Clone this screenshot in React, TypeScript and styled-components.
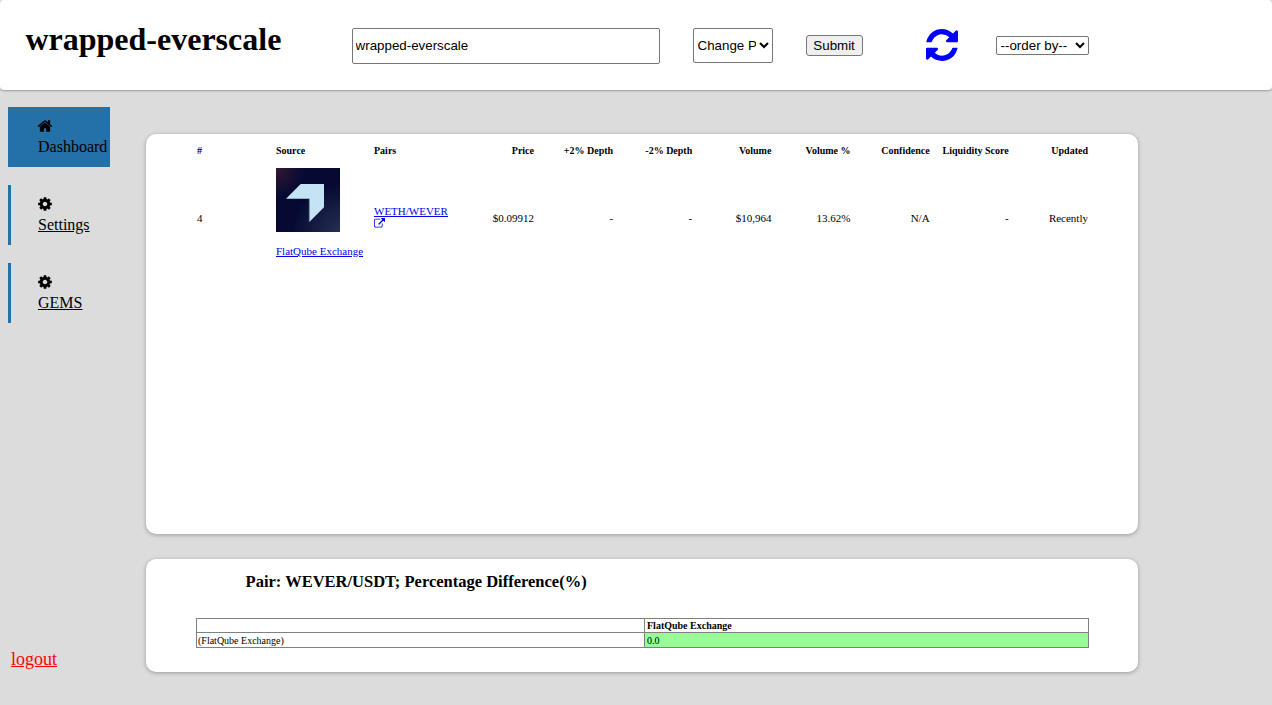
import React from "react";
import styled, { createGlobalStyle } from "styled-components";

const Global = createGlobalStyle`
  html, body { margin: 0; padding: 0; }
  body { background: #dcdcdc; font-family: "Liberation Serif", "Times New Roman", serif; color: #000; }
`;

const Page = styled.div`
  width: 1272px;
  height: 705px;
  display: flex;
  flex-direction: column;
  overflow: hidden;
`;

const Header = styled.header`
  height: 90px;
  flex: none;
  display: flex;
  align-items: flex-start;
  padding-left: 25.44px;
  background: #fff;
  border-radius: 4px;
  box-shadow: 0 1px 2px rgba(0, 0, 0, 0.3);
`;

const Title = styled.h1`
  margin: 21px 0 0;
  width: 255.56px;
  font-size: 32px;
  line-height: 37px;
  font-weight: 700;
  white-space: nowrap;
`;

const SearchInput = styled.input`
  box-sizing: border-box;
  margin: 28px 0 0 70.6px;
  width: 308px;
  height: 36px;
  padding: 0 3px 2px;
  font: 13.3333px "Liberation Sans", Arial, sans-serif;
  border: 1px solid #767676;
  border-radius: 2px;
  background: #fff;
`;

const ChangeSelect = styled.select`
  box-sizing: border-box;
  margin: 28px 0 0 33px;
  width: 80px;
  height: 35px;
  font: 13.3333px "Liberation Sans", Arial, sans-serif;
  border: 1px solid #767676;
  border-radius: 2px;
  background: #fff;
`;

const SubmitButton = styled.button`
  box-sizing: border-box;
  margin: 35px 0 0 33px;
  width: 57px;
  height: 21px;
  padding: 1px 6px;
  font: 13.3333px "Liberation Sans", Arial, sans-serif;
  background: #efefef;
  border: 1px solid #767676;
  border-radius: 3px;
  color: #000;
`;

const RefreshIcon = styled.svg`
  margin: 29px 0 0 63px;
  width: 32px;
  height: 32px;
  fill: #0000ff;
  flex: none;
`;

const OrderSelect = styled.select`
  box-sizing: border-box;
  margin: 36px 0 0 38px;
  width: 93px;
  height: 19px;
  font: 13.3333px "Liberation Sans", Arial, sans-serif;
  border: 1px solid #767676;
  border-radius: 2px;
  background: #fff;
`;

const Body = styled.div`
  flex: 1;
  display: flex;
  min-height: 0;
`;

const Sidebar = styled.nav`
  width: 102px;
  flex: none;
  margin-left: 8px;
  padding-top: 17px;
  padding-bottom: 36px;
  display: flex;
  flex-direction: column;
  gap: 18px;
`;

const NavItem = styled.div<{ $active?: boolean }>`
  box-sizing: border-box;
  height: 60px;
  padding: 11px 0 0 ${(p) => (p.$active ? 30 : 27)}px;
  font-size: 16px;
  line-height: 18px;
  white-space: nowrap;
  background: ${(p) => (p.$active ? "#2471a8" : "transparent")};
  border-left: ${(p) => (p.$active ? "0" : "3px solid #2471a8")};
`;

const NavGlyph = styled.svg`
  display: block;
  width: 16px;
  height: 16px;
  margin: 0 0 4px -1px;
  fill: #000;
`;

const NavLink = styled.a<{ $active?: boolean }>`
  color: #000;
  text-decoration: ${(p) => (p.$active ? "none" : "underline")};
`;

const Logout = styled.a`
  margin-top: auto;
  margin-left: 3px;
  color: #ff0000;
  font-size: 18px;
  line-height: 20px;
  text-decoration: underline;
`;

const Main = styled.main`
  margin-left: 36px;
  width: 992px;
  padding-top: 44px;
  display: flex;
  flex-direction: column;
  gap: 25px;
`;

const Card = styled.section<{ $h: number }>`
  box-sizing: border-box;
  height: ${(p) => p.$h}px;
  background: #fff;
  border-radius: 10px;
  box-shadow: 0 1px 4px rgba(0, 0, 0, 0.3);
`;

const DataTable = styled.table`
  margin: 8px 0 0 47px;
  border-collapse: collapse;
  table-layout: fixed;
  width: 899px;
  font-size: 11px;
  line-height: 12px;
`;

const Column = styled.col<{ $w: number }>`
  width: ${(p) => p.$w}px;
`;

const Th = styled.th<{ $left?: boolean }>`
  padding: 3px 4px;
  font-size: 10px;
  font-weight: 700;
  white-space: nowrap;
  text-align: ${(p) => (p.$left ? "left" : "right")};
`;

const Td = styled.td<{ $left?: boolean }>`
  padding: 3px 4px;
  white-space: nowrap;
  vertical-align: middle;
  text-align: ${(p) => (p.$left ? "left" : "right")};
`;

const HashHead = styled(Th)`
  color: #00008b;
`;

const SourceCell = styled.div`
  padding: 5px 0 16px;
`;

const Logo = styled.svg`
  display: block;
  width: 64px;
  height: 64px;
  margin-bottom: 13px;
`;

const BlueLink = styled.a`
  color: #0000ee;
  text-decoration: underline;
`;

const PairLink = styled(BlueLink)`
  display: block;
  padding-bottom: 2px;
  white-space: normal;
`;

const ExternalGlyph = styled.svg`
  display: block;
  width: 11px;
  height: 11px;
  margin-top: 1px;
  fill: #0000ee;
`;

const PairHeading = styled.h3`
  margin: 0;
  padding: 13px 0 0 99.6px;
  font-size: 16.5px;
  line-height: 20px;
  font-weight: 700;
`;

const DiffTable = styled.table`
  margin: 26px 0 0 50px;
  width: 892px;
  border-collapse: collapse;
  table-layout: fixed;
  font-size: 10px;
  line-height: 12px;
`;

const DiffTh = styled.th`
  border: 1px solid #808080;
  padding: 1px 2px 0;
  height: 12px;
  text-align: left;
  font-weight: 700;
  white-space: nowrap;
`;

const DiffTd = styled.td<{ $green?: boolean }>`
  border: 1px solid #808080;
  padding: 2px 2px 0 ${(p) => (p.$green ? 2 : 1)}px;
  height: 12.4px;
  background: ${(p) => (p.$green ? "#98fb98" : "transparent")};
  white-space: nowrap;
`;

const widths = [79, 98, 89, 79, 79.14, 79.14, 79.14, 79.14, 79.14, 79.14, 79.16];

const HOME =
  "M1472 992v480q0 26-19 45t-45 19h-384v-384h-256v384h-384q-26 0-45-19t-19-45v-480q0-1 .5-3t.5-3l575-474 575 474q1 2 1 6zm223-69l-62 74q-8 9-21 11h-3q-13 0-21-7l-692-577-692 577q-12 8-24 7-13-2-21-11l-62-74q-8-10-7-23.5t11-21.5l719-599q32-26 76-26t76 26l244 204v-195q0-14 9-23t23-9h192q14 0 23 9t9 23v408l219 182q10 8 11 21.5t-7 23.5z";
const COG =
  "M1152 896q0-106-75-181t-181-75-181 75-75 181 75 181 181 75 181-75 75-181zm512-109v222q0 12-8 23t-20 13l-185 28q-19 54-39 91 35 50 107 138 10 12 10 25t-9 23q-27 37-99 108t-94 71q-12 0-26-9l-138-108q-44 23-91 38-16 136-29 186-7 28-36 28h-222q-14 0-24.5-8.5t-11.5-21.5l-28-184q-49-16-90-37l-141 107q-10 9-25 9-14 0-25-11-126-114-165-168-7-10-7-23 0-12 8-23 15-21 51-66.5t54-70.5q-27-50-41-99l-183-27q-13-2-21-12.5t-8-23.5v-222q0-12 8-23t19-13l186-28q14-46 39-92-40-57-107-138-10-12-10-24 0-10 9-23 26-36 98.5-107.5t94.5-71.5q13 0 26 10l138 107q44-23 91-38 16-136 29-186 7-28 36-28h222q14 0 24.5 8.5t11.5 21.5l28 184q49 16 90 37l142-107q9-9 24-9 13 0 25 10 129 119 165 170 7 8 7 22 0 12-8 23-15 21-51 66.5t-54 70.5q26 50 41 98l183 28q13 2 21 12.5t8 23.5z";
const REFRESH =
  "M1639 1056q0 5-1 7-64 268-268 434.5t-478 166.5q-146 0-282.5-55t-243.5-157l-129 129q-19 19-45 19t-45-19-19-45v-448q0-26 19-45t45-19h448q26 0 45 19t19 45-19 45l-137 137q71 66 161 102t187 36q134 0 250-65t186-179q11-17 53-117 8-23 30-23h192q13 0 22.5 9.5t9.5 22.5zm25-800v448q0 26-19 45t-45 19h-448q-26 0-45-19t-19-45 19-45l138-138q-148-137-349-137-134 0-250 65t-186 179q-11 17-53 117-8 23-30 23h-199q-13 0-22.5-9.5t-9.5-22.5v-7q65-268 270-434.5t480-166.5q146 0 284 55.5t245 156.5l130-129q19-19 45-19t45 19 19 45z";
const EXTERNAL =
  "M1408 928v320q0 119-84.5 203.5t-203.5 84.5h-832q-119 0-203.5-84.5t-84.5-203.5v-832q0-119 84.5-203.5t203.5-84.5h704q14 0 23 9t9 23v64q0 14-9 23t-23 9h-704q-66 0-113 47t-47 113v832q0 66 47 113t113 47h832q66 0 113-47t47-113v-320q0-14 9-23t23-9h64q14 0 23 9t9 23zm384-864v512q0 26-19 45t-45 19-45-19l-176-176-652 652q-10 10-23 10t-23-10l-114-114q-10-10-10-23t10-23l652-652-176-176q-19-19-19-45t19-45 45-19h512q26 0 45 19t19 45z";

export default function App() {
  return (
    <Page>
      <Global />
      <Header>
        <Title>wrapped-everscale</Title>
        <SearchInput defaultValue="wrapped-everscale" />
        <ChangeSelect defaultValue="p">
          <option value="p">Change Percent</option>
        </ChangeSelect>
        <SubmitButton>Submit</SubmitButton>
        <RefreshIcon viewBox="128 128 1536 1536">
          <path d={REFRESH} />
        </RefreshIcon>
        <OrderSelect defaultValue="o">
          <option value="o">--order by--</option>
        </OrderSelect>
      </Header>
      <Body>
        <Sidebar>
          <NavItem $active>
            <NavGlyph viewBox="0 0 1792 1792">
              <path d={HOME} />
            </NavGlyph>
            <NavLink $active>Dashboard</NavLink>
          </NavItem>
          <NavItem>
            <NavGlyph viewBox="0 0 1792 1792">
              <path d={COG} />
            </NavGlyph>
            <NavLink href="#">Settings</NavLink>
          </NavItem>
          <NavItem>
            <NavGlyph viewBox="0 0 1792 1792">
              <path d={COG} />
            </NavGlyph>
            <NavLink href="#">GEMS</NavLink>
          </NavItem>
          <Logout href="#">logout</Logout>
        </Sidebar>
        <Main>
          <Card $h={400}>
            <DataTable>
              <colgroup>
                {widths.map((w, i) => (
                  <Column key={i} $w={w} />
                ))}
              </colgroup>
              <thead>
                <tr>
                  <HashHead $left>#</HashHead>
                  <Th $left>Source</Th>
                  <Th $left>Pairs</Th>
                  <Th>Price</Th>
                  <Th>+2% Depth</Th>
                  <Th>-2% Depth</Th>
                  <Th>Volume</Th>
                  <Th>Volume %</Th>
                  <Th>Confidence</Th>
                  <Th>Liquidity Score</Th>
                  <Th>Updated</Th>
                </tr>
              </thead>
              <tbody>
                <tr>
                  <Td $left>4</Td>
                  <Td $left>
                    <SourceCell>
                      <Logo viewBox="0 0 64 64">
                        <defs>
                          <radialGradient id="tl" cx="0" cy="0" r="0.45">
                            <stop offset="0" stopColor="#331830" />
                            <stop offset="1" stopColor="#331830" stopOpacity="0" />
                          </radialGradient>
                          <radialGradient id="br" cx="1" cy="1" r="0.75">
                            <stop offset="0" stopColor="#262e52" />
                            <stop offset="1" stopColor="#262e52" stopOpacity="0" />
                          </radialGradient>
                        </defs>
                        <rect width="64" height="64" fill="#060a33" />
                        <rect width="64" height="64" fill="url(#tl)" />
                        <rect width="64" height="64" fill="url(#br)" />
                        <path d="M10 30.7 24.7 16H48v23.3L33.3 54V30.7Z" fill="#c5e4f3" />
                        <path d="M33.3 30.7V54" stroke="#6d8796" strokeWidth="0.8" fill="none" />
                      </Logo>
                      <BlueLink href="#">FlatQube Exchange</BlueLink>
                    </SourceCell>
                  </Td>
                  <Td $left>
                    <PairLink href="#">
                      WETH/WEVER
                      <ExternalGlyph viewBox="0 0 1792 1792">
                        <path d={EXTERNAL} />
                      </ExternalGlyph>
                    </PairLink>
                  </Td>
                  <Td>$0.09912</Td>
                  <Td>-</Td>
                  <Td>-</Td>
                  <Td>$10,964</Td>
                  <Td>13.62%</Td>
                  <Td>N/A</Td>
                  <Td>-</Td>
                  <Td>Recently</Td>
                </tr>
              </tbody>
            </DataTable>
          </Card>
          <Card $h={113}>
            <PairHeading>Pair: WEVER/USDT; Percentage Difference(%)</PairHeading>
            <DiffTable>
              <colgroup>
                <Column $w={448} />
                <Column $w={444} />
              </colgroup>
              <tbody>
                <tr>
                  <DiffTh />
                  <DiffTh>FlatQube Exchange</DiffTh>
                </tr>
                <tr>
                  <DiffTd>(FlatQube Exchange)</DiffTd>
                  <DiffTd $green>0.0</DiffTd>
                </tr>
              </tbody>
            </DiffTable>
          </Card>
        </Main>
      </Body>
    </Page>
  );
}
